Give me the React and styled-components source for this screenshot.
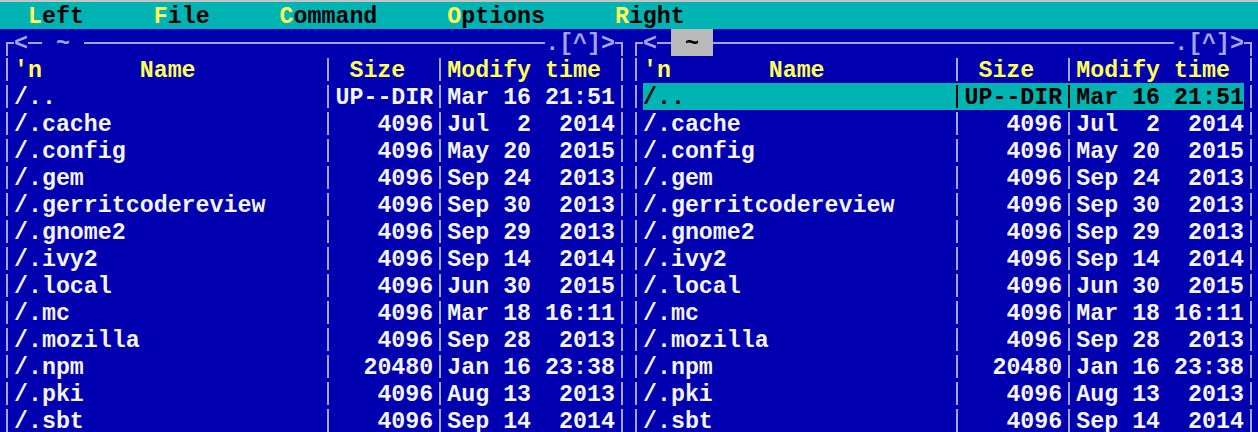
import React from 'react';
import styled, { createGlobalStyle } from 'styled-components';

// terminal grid: 90 columns x 16 rows
const CW = 1258 / 90;
const RH = 27;
const ch = (n) => `${n * CW}px`;

const BLUE = '#0000b0';
const CYAN = '#00b4b4';
const LINE = '#a4a4f0';
const YELLOW = '#ffff55';
const WHITE = '#f4f4f4';

const GlobalStyle = createGlobalStyle`
  html, body {
    margin: 0;
    padding: 0;
    background: ${BLUE};
    overflow: hidden;
  }
  body {
    font-family: "Liberation Mono", "Courier New", monospace;
    font-weight: bold;
    font-size: ${CW / 0.6}px;
    /* a bit taller than the cell so glyphs sit lower, as in the console */
    line-height: ${RH + 4}px;
  }
`;

const Screen = styled.div`
  width: 1258px;
  height: 430px;
  border-top: 2px solid #c4c4c4;
  background: ${BLUE};
  overflow: hidden;
`;

const MenuBar = styled.div`
  display: flex;
  height: ${RH}px;
  background: ${CYAN};
  padding-left: ${ch(2)};
  gap: ${ch(5)};
  overflow: hidden;
`;

const MenuItem = styled.span`
  color: #000;
  white-space: pre;
`;

const Hot = styled.span`
  color: ${YELLOW};
`;

const Panels = styled.div`
  display: flex;
`;

const Panel = styled.div`
  width: ${ch(45)};
  display: flex;
  flex-direction: column;
`;

const TitleRow = styled.div`
  display: flex;
  height: ${RH}px;
  color: ${LINE};
  overflow: hidden;
`;

const Corner = styled.div`
  width: ${ch(1)};
  display: flex;
  align-items: flex-end;
  justify-content: ${(p) => (p.$side === 'left' ? 'flex-end' : 'flex-start')};
  &::before {
    content: '';
    box-sizing: border-box;
    width: calc(50% + 1px);
    height: calc(50% + 1px);
    border-top: 2px solid ${LINE};
    border-${(p) => p.$side}: 2px solid ${LINE};
  }
`;

const Rule = styled.div`
  flex: ${(p) => (p.$n ? `0 0 ${ch(p.$n)}` : '1')};
  display: flex;
  align-items: center;
  &::before {
    content: '';
    width: 100%;
    height: 2px;
    background: ${LINE};
  }
`;

const TitleText = styled.span`
  white-space: pre;
`;

const PathTag = styled.span`
  white-space: pre;
  background: ${(p) => (p.$active ? '#b9b9b9' : 'transparent')};
  color: ${(p) => (p.$active ? '#000' : LINE)};
`;

const Row = styled.div`
  display: flex;
  height: ${RH}px;
`;

const VLine = styled.div`
  width: ${ch(1)};
  display: flex;
  justify-content: center;
  align-items: center;
  &::before {
    content: '';
    width: 2px;
    height: 23px;
    background: ${(p) => (p.$dark ? '#000' : LINE)};
  }
`;

const Inner = styled.div`
  display: flex;
  width: ${ch(43)};
  background: ${(p) => (p.$selected ? CYAN : 'transparent')};
  color: ${(p) => (p.$head ? YELLOW : p.$selected ? '#000' : WHITE)};
`;

const Cell = styled.div`
  width: ${(p) => ch(p.$w)};
  height: ${RH}px;
  white-space: pre;
  overflow: hidden;
  text-align: ${(p) => p.$align || 'left'};
`;

const files = [
  ['/..', 'UP--DIR', 'Mar 16 21:51'],
  ['/.cache', '4096', 'Jul  2  2014'],
  ['/.config', '4096', 'May 20  2015'],
  ['/.gem', '4096', 'Sep 24  2013'],
  ['/.gerritcodereview', '4096', 'Sep 30  2013'],
  ['/.gnome2', '4096', 'Sep 29  2013'],
  ['/.ivy2', '4096', 'Sep 14  2014'],
  ['/.local', '4096', 'Jun 30  2015'],
  ['/.mc', '4096', 'Mar 18 16:11'],
  ['/.mozilla', '4096', 'Sep 28  2013'],
  ['/.npm', '20480', 'Jan 16 23:38'],
  ['/.pki', '4096', 'Aug 13  2013'],
  ['/.sbt', '4096', 'Sep 14  2014'],
];

const menu = ['Left', 'File', 'Command', 'Options', 'Right'];

const FilePanel = ({ active }) => (
  <Panel>
    <TitleRow>
      <Corner $side="left" />
      <TitleText>{'<'}</TitleText>
      <Rule $n={1} />
      <PathTag $active={active}>{' ~ '}</PathTag>
      <Rule />
      <TitleText>{'.[^]>'}</TitleText>
      <Corner $side="right" />
    </TitleRow>
    <Row>
      <VLine />
      <Inner $head>
        <Cell $w={22}>{"'n       Name"}</Cell>
        <VLine />
        <Cell $w={7}>{' Size'}</Cell>
        <VLine />
        <Cell $w={12}>{'Modify time'}</Cell>
      </Inner>
      <VLine />
    </Row>
    {files.map(([name, size, time], i) => {
      const selected = active && i === 0;
      return (
        <Row key={name}>
          <VLine />
          <Inner $selected={selected}>
            <Cell $w={22}>{name}</Cell>
            <VLine $dark={selected} />
            <Cell $w={7} $align="right">{size}</Cell>
            <VLine $dark={selected} />
            <Cell $w={12}>{time}</Cell>
          </Inner>
          <VLine />
        </Row>
      );
    })}
  </Panel>
);

const App = () => (
  <>
    <GlobalStyle />
    <Screen>
      <MenuBar>
        {menu.map((m) => (
          <MenuItem key={m}>
            <Hot>{m[0]}</Hot>
            {m.slice(1)}
          </MenuItem>
        ))}
      </MenuBar>
      <Panels>
        <FilePanel />
        <FilePanel active />
      </Panels>
    </Screen>
  </>
);

export default App;
